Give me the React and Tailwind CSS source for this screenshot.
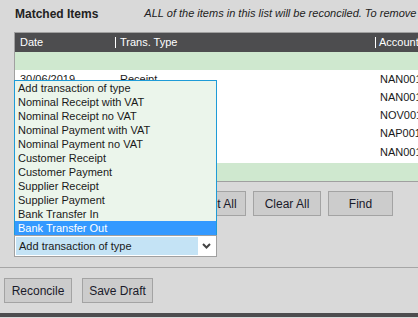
import React from "react";

const rows = [
  { date: "30/06/2019", type: "Receipt", account: "NAN001" },
  { date: "", type: "", account: "NAN001" },
  { date: "", type: "", account: "NOV001" },
  { date: "", type: "", account: "NAP001" },
  { date: "", type: "", account: "NAN001" },
];

const options = [
  "Add transaction of type",
  "Nominal Receipt with VAT",
  "Nominal Receipt no VAT",
  "Nominal Payment with VAT",
  "Nominal Payment no VAT",
  "Customer Receipt",
  "Customer Payment",
  "Supplier Receipt",
  "Supplier Payment",
  "Bank Transfer In",
  "Bank Transfer Out",
];

function Button({ children, className = "" }) {
  return (
    <div
      className={
        "flex h-[25px] items-center justify-center border border-[#a3a3a3] bg-[#cccccc] text-[12px] text-[#1a1a2a] " +
        className
      }
    >
      {children}
    </div>
  );
}

export default function App() {
  return (
    <div className="relative h-[318px] w-[418px] overflow-hidden bg-[#d9d9d9] font-['Liberation_Sans',Arial,sans-serif] text-[#1a1a1a]">
      {/* title */}
      <div className="flex h-[32px] items-center pb-[5px]">
        <span className="pl-[15px] text-[12px] font-bold text-[#222]">
          Matched Items
        </span>
        <span className="ml-[46px] whitespace-nowrap text-[11px] italic text-[#222]">
          ALL of the items in this list will be reconciled. To remove
        </span>
      </div>

      {/* table */}
      <div className="ml-[14px] w-[440px] border-t border-b border-l border-[#a0a0a0]">
        <div className="flex h-[19px] items-center bg-[#4d4d4f] text-[11px] text-white">
          <div className="w-[100px] pl-[5px]">Date</div>
          <div className="flex w-[260px] items-center">
            <span className="h-[11px] w-px bg-white" />
            <span className="pl-[4px]">Trans. Type</span>
          </div>
          <div className="flex items-center">
            <span className="h-[11px] w-px bg-white" />
            <span className="pl-[3px]">Account</span>
          </div>
        </div>
        <div className="h-[18px] bg-[#cfe8cf]" />
        <div className="flex h-[93px] flex-col bg-white pb-[2px] text-[11px]">
          {rows.map((r, i) => (
            <div key={i} className="flex flex-1 items-center">
              <div className="w-[100px] pl-[5px]">{r.date}</div>
              <div className="w-[260px] pl-[5px]">{r.type}</div>
              <div className="pl-[5px]">{r.account}</div>
            </div>
          ))}
        </div>
        <div className="h-[18px] bg-[#cfe8cf]" />
      </div>

      {/* action buttons */}
      <div className="mt-[9px] flex gap-[7px] pl-[178px]">
        <Button className="w-[68px]">Select All</Button>
        <Button className="w-[68px]">Clear All</Button>
        <Button className="w-[65px]">Find</Button>
      </div>

      {/* add transaction select */}
      <div className="ml-[14px] mt-[19px] flex h-[22px] w-[203px] border border-[#a0a0a0] bg-white p-[1px]">
        <div className="flex flex-1 items-center bg-[#c4e3f5] pl-[3px] text-[11px] text-[#1a1a1a]">
          Add transaction of type
        </div>
        <div className="flex w-[17px] items-center justify-center">
          <svg width="9" height="6" viewBox="0 0 9 6">
            <path
              d="M1 1 L4.5 4.5 L8 1"
              fill="none"
              stroke="#444"
              strokeWidth="2"
            />
          </svg>
        </div>
      </div>

      {/* separator */}
      <div className="mt-[10px] h-px bg-[#a6a6a6]" />

      {/* bottom buttons */}
      <div className="mt-[10px] flex gap-[10px] pl-[4px]">
        <Button className="w-[68px]">Reconcile</Button>
        <Button className="w-[71px]">Save Draft</Button>
      </div>

      <div className="mt-[10px] h-[4px] bg-[#4d4d4f]" />

      {/* open dropdown list */}
      <div className="absolute left-[14px] top-[80px] w-[203px] border border-b-0 border-[#1e9bd7] bg-[#ebf5eb]">
        {options.map((o, i) => (
          <div
            key={o}
            className={
              "flex h-[14px] items-center pl-[3px] text-[11px] " +
              (i === options.length - 1
                ? "bg-[#3399ff] text-white"
                : "text-[#1a1a1a]")
            }
          >
            {o}
          </div>
        ))}
      </div>
    </div>
  );
}
